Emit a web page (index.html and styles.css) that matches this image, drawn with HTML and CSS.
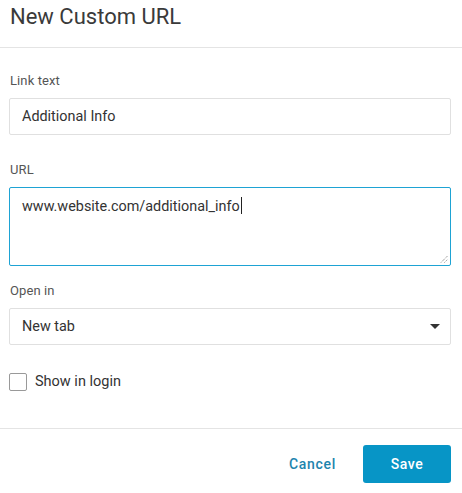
FILE: index.html
```html
<!DOCTYPE html>
<html>
<head>
<meta charset="utf-8">
<link rel="stylesheet" href="styles.css">
</head>
<body>
<div class="dialog">
  <div class="header">
    <h1 class="title">New Custom URL</h1>
  </div>
  <div class="form">
    <div class="field">
      <div class="label">Link text</div>
      <div class="input">Additional Info</div>
    </div>
    <div class="field field-url">
      <div class="label">URL</div>
      <div class="textarea">
        <span class="value">www.website.com/additional_info</span><span class="caret"></span>
        <svg class="grip" width="8" height="8" viewBox="0 0 8 8">
          <line x1="1" y1="7.5" x2="7.5" y2="1" stroke="#777" stroke-width="1" stroke-dasharray="1 1"/>
          <line x1="4.5" y1="7.5" x2="7.5" y2="4.5" stroke="#777" stroke-width="1" stroke-dasharray="1 1"/>
        </svg>
      </div>
    </div>
    <div class="field field-open">
      <div class="label">Open in</div>
      <div class="select">
        <span>New tab</span>
        <svg class="arrow" width="10" height="5" viewBox="0 0 10 5"><path d="M0 0 L10 0 L5 5 Z" fill="#333"/></svg>
      </div>
    </div>
    <div class="check-row">
      <span class="checkbox"></span>
      <span class="check-label">Show in login</span>
    </div>
  </div>
  <div class="footer">
    <button class="btn-cancel">Cancel</button>
    <button class="btn-save">Save</button>
  </div>
</div>
</body>
</html>
```

FILE: styles.css
```css
* { box-sizing: border-box; }
html, body { margin: 0; padding: 0; background: #fff; }
body { font-family: Roboto, "Liberation Sans", sans-serif; color: #333; }
.dialog { width: 462px; }
.header {
  height: 48px;
  border-bottom: 1px solid #e4e4e4;
  padding: 0 10px;
}
.title {
  margin: 0;
  font-size: 22px;
  font-weight: 400;
  line-height: 34px;
  color: #3a3a3a;
}
.form { padding: 25px 11px 0 9px; }
.field { display: flex; flex-direction: column; }
.field-url { margin-top: 26.5px; }
.field-open { margin-top: 16.5px; }
.label {
  font-size: 13px;
  line-height: 16px;
  color: #555;
  margin-bottom: 9px;
  padding-left: 1px;
  letter-spacing: 0.1px;
}
.input, .select {
  height: 37px;
  border: 1px solid #e0e0e0;
  border-radius: 2px;
  padding: 0 12px;
  font-size: 14.4px;
  color: #333;
  display: flex;
  align-items: center;
}
.select { justify-content: space-between; padding-right: 10px; }
.arrow { display: block; margin-top: 1px; }
.textarea {
  position: relative;
  height: 79.5px;
  border: 1px solid #1ea3d4;
  border-radius: 2px;
  padding: 9px 12px;
  font-size: 14.4px;
  line-height: 20px;
  color: #333;
}
.caret {
  display: inline-block;
  width: 1px;
  height: 17px;
  background: #222;
  vertical-align: -3px;
  margin-left: 1px;
}
.grip { position: absolute; right: 2px; bottom: 2px; }
.check-row {
  display: flex;
  align-items: center;
  margin-top: 28px;
  height: 18px;
}
.checkbox {
  width: 18px;
  height: 18px;
  border: 1px solid #999;
  border-radius: 2px;
  background: #fff;
}
.check-label {
  margin-left: 8px;
  font-size: 14.5px;
  color: #333;
}
.footer {
  margin-top: 37px;
  border-top: 1px solid #e4e4e4;
  padding: 16px 11px 0 0;
  display: flex;
  justify-content: flex-end;
  align-items: center;
}
button { font-family: Roboto, "Liberation Sans", sans-serif; cursor: pointer; }
.btn-cancel {
  border: none;
  background: none;
  color: #1d84ad;
  font-size: 14px;
  font-weight: 500;
  letter-spacing: 0.7px;
  height: 38px;
  padding: 0;
  margin-right: 27px;
}
.btn-save {
  width: 88px;
  height: 38px;
  border: none;
  border-radius: 3px;
  background: #0795c6;
  color: #fff;
  font-size: 14px;
  font-weight: 500;
  letter-spacing: 0.6px;
}
```
